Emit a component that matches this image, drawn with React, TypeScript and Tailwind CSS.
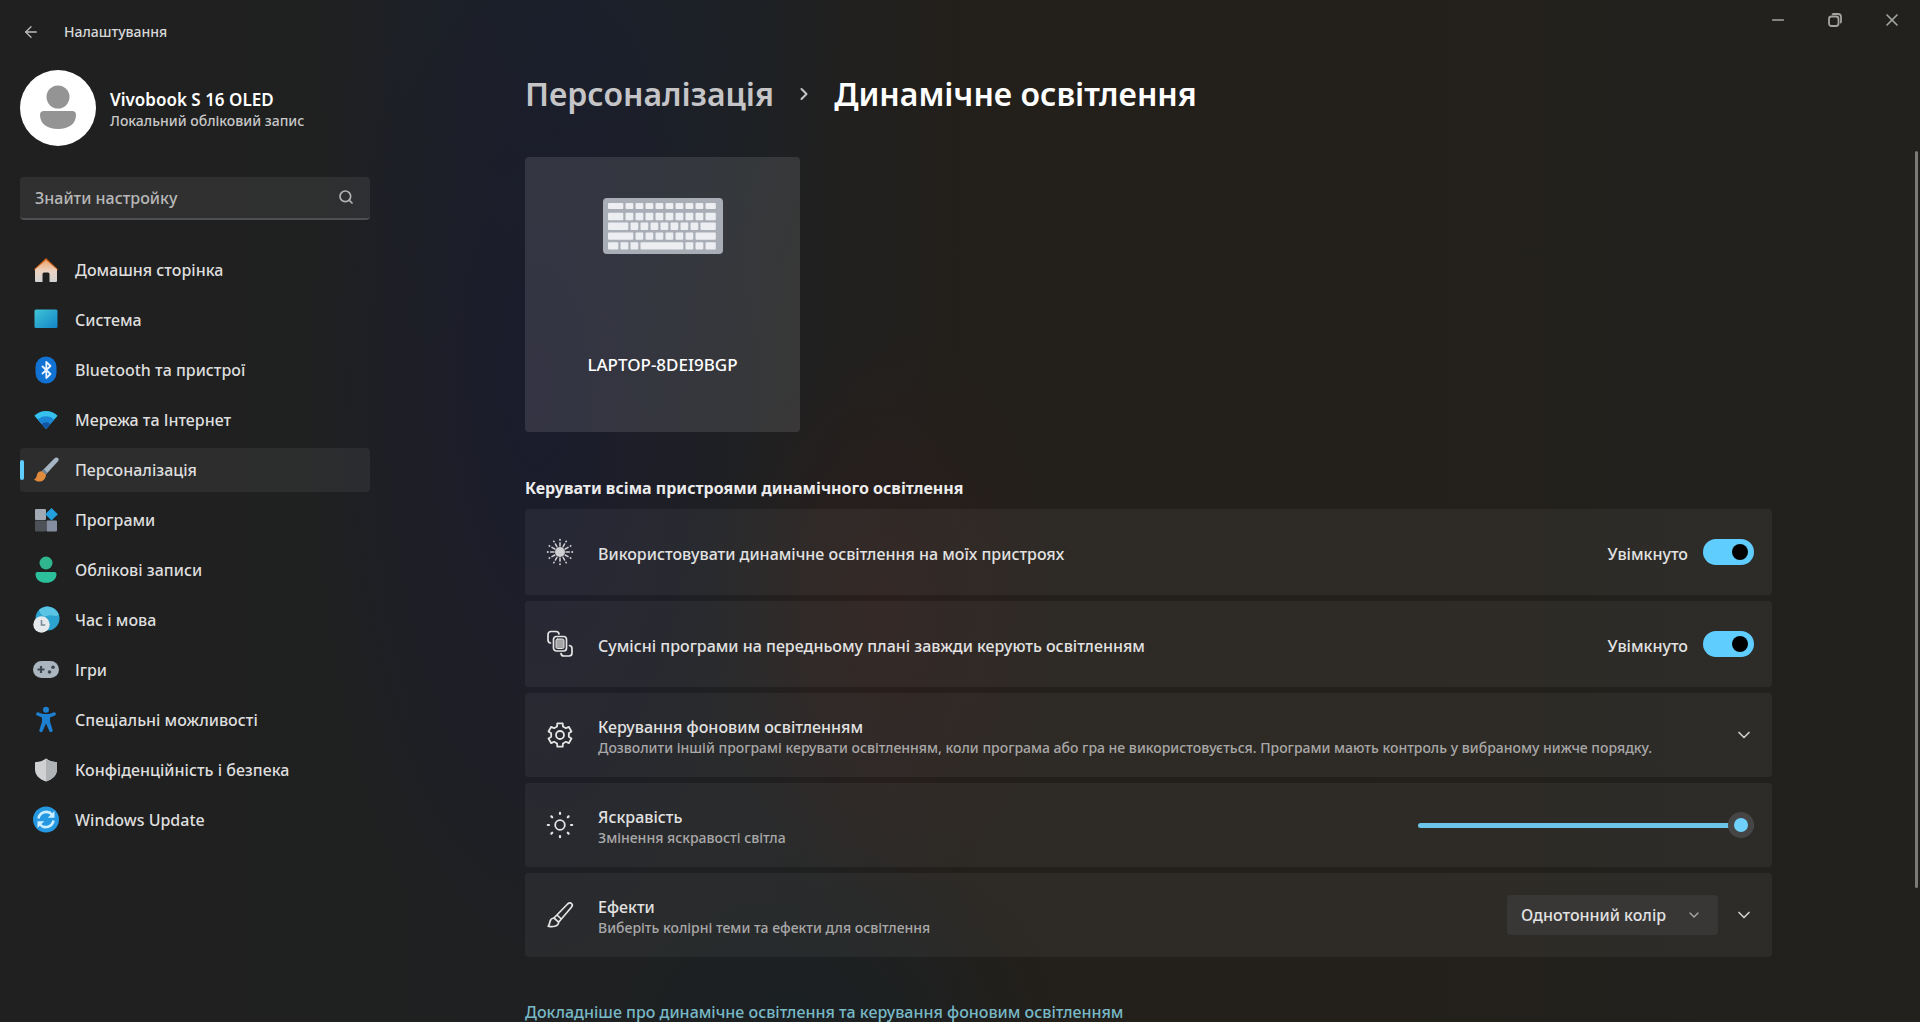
import React, { useState } from "react";
import { ArrowLeft, ChevronDown, ChevronRight, Minus, Search, X } from "lucide-react";

const HomeIcon = () => (
  <svg viewBox="0 0 24 24" className="size-6">
    <defs>
      <linearGradient id="home-wall" x1="0" y1="0" x2="0" y2="1">
        <stop offset="0" stopColor="#f0a56c" />
        <stop offset="0.5" stopColor="#ecd3c2" />
        <stop offset="1" stopColor="#d2d2d2" />
      </linearGradient>
    </defs>
    <path d="M12 0 .6 10.800a1.200 1.200 0 0 0 1.600 1.700L12 4l9.800 8.500a1.200 1.200 0 0 0 1.600-1.700Z" fill="#c8601c" />
    <path d="M12 2 1 11.500V23a1 1 0 0 0 1 1h6.500v-8a1.500 1.500 0 0 1 1.500-1.500h4a1.500 1.500 0 0 1 1.500 1.500v8H22a1 1 0 0 0 1-1V11.500Z" fill="url(#home-wall)" />
  </svg>
);

const SystemIcon = () => (
  <svg viewBox="0 0 24 24" className="size-6">
    <defs>
      <linearGradient id="system" x1="0" y1="0" x2="1" y2="1">
        <stop offset="0" stopColor="#40c6d6" />
        <stop offset="1" stopColor="#1383c6" />
      </linearGradient>
    </defs>
    <rect x="0.500" y="1.500" width="23" height="18.500" rx="1.500" fill="url(#system)" />
  </svg>
);

const BluetoothIcon = () => (
  <svg viewBox="0 0 24 24" className="size-6 overflow-visible">
    <rect x="1.500" y="-1.500" width="21" height="27" rx="10.500" fill="#1172d3" />
    <path d="m8 8 8.500 8-4.200 4V4l4.200 4L8 16" fill="none" stroke="#e9f4ff" strokeWidth="1.800" strokeLinejoin="round" />
  </svg>
);

const NetworkIcon = () => (
  <svg viewBox="0 0 24 24" className="size-6">
    <path d="M12 3C7.400 3 3.300 4.700.4 7.800L12 21 23.600 7.800C20.700 4.700 16.600 3 12 3Z" fill="#35c0ee" />
    <path d="M3.900 11.700a11.500 11.500 0 0 1 16.200 0L12 21Z" fill="#1c86d6" />
    <path d="M7.600 16a6.200 6.200 0 0 1 8.800 0L12 21Z" fill="#1256a3" />
  </svg>
);

const BrushIcon = () => (
  <svg viewBox="0 0 24 24" className="size-6 overflow-visible">
    <path d="M24 0c-1-1-2.600-.6-3.700.4L7.500 13.500l3.700 3.700L23.800 3.600C24.800 2.500 25 1 24 0Z" fill="#a5b5c4" />
    <path d="m7.500 13.500 2.300-2.400 3.700 3.700-2.300 2.400Z" fill="#6f7f8e" />
    <path d="M7.800 13.300c-2.800-.2-4.400 1.300-4.900 3.700-.4 2-1 3.600-2.900 4.600 3.500 3.600 11.600 2.600 12-4.800Z" fill="#e08a3c" />
  </svg>
);

const AppsIcon = () => (
  <svg viewBox="0 0 24 24" className="size-6">
    <rect x="1" y="1" width="11" height="11" rx="1" fill="#a3a9b3" />
    <rect x="1" y="12.500" width="11" height="11" rx="1" fill="#4c5258" />
    <rect x="12.500" y="12.500" width="10.500" height="11" rx="1" fill="#858da0" />
    <path d="m17.500 0 6.300 6.200-6.300 6.200-6.300-6.200Z" fill="#22a0dd" />
  </svg>
);

const AccountsIcon = () => (
  <svg viewBox="0 0 24 24" className="size-6 overflow-visible">
    <circle cx="12" cy="5" r="6.500" fill="#2fb68f" />
    <path d="M3.500 14h17a2 2 0 0 1 2 2c0 5.500-4.500 8.800-10.500 8.800S1.500 21.500 1.500 16a2 2 0 0 1 2-2Z" fill="#2bbf9b" />
  </svg>
);

const TimeIcon = () => (
  <svg viewBox="0 0 24 24" className="size-6 overflow-visible">
    <circle cx="13.500" cy="10.500" r="12" fill="#2ba2cf" />
    <path d="M13.500-1.500a12 12 0 0 1 11.300 8.500c-4 2.500-8-1-12 1S6 5 5 2a12 12 0 0 1 8.500-3.500Z" fill="#59c4e4" />
    <circle cx="7.500" cy="16.500" r="8.200" fill="#e6e9ec" />
    <path d="M7.500 12v5h3.800" fill="none" stroke="#7b8a94" strokeWidth="1.600" />
  </svg>
);

const GamesIcon = () => (
  <svg viewBox="0 0 24 24" className="size-6 overflow-visible">
    <rect x="-1" y="3" width="26" height="17" rx="8.500" fill="#aab5c0" />
    <path d="M7 8v7M3.500 11.500h7" stroke="#3d474f" strokeWidth="2.200" />
    <circle cx="15.500" cy="14" r="1.800" fill="#3d474f" />
    <circle cx="19" cy="9.300" r="1.800" fill="#3d474f" />
  </svg>
);

const AccessibilityIcon = () => (
  <svg viewBox="0 0 24 24" className="size-6 overflow-visible">
    <circle cx="12" cy="1.800" r="3" fill="#1d7fd0" />
    <path
      d="M2.300 5.200c.5-1 1.500-1.300 2.500-.8 4.500 2.100 9.900 2.100 14.400 0 1-.5 2-.2 2.500.8s0 2-.9 2.400L16 9.500v4.200l2.600 8.200c.3 1-.1 1.900-1.100 2.200s-1.900-.2-2.200-1.100L12 15.500 8.700 23c-.3.900-1.200 1.400-2.200 1.100s-1.400-1.200-1.100-2.200L8 13.700V9.500L3.200 7.600c-.9-.4-1.400-1.400-.9-2.400Z"
      fill="#1d7fd0"
    />
  </svg>
);

const PrivacyIcon = () => (
  <svg viewBox="0 0 24 24" className="size-6">
    <path d="M12 .5c3 2.400 6.500 3.500 11 3.700v7C23 17 19 21 12 23.500 5 21 1 17 1 11.200v-7C5.500 4 9 2.900 12 .5Z" fill="#cfd1d3" />
    <path d="M12 .5c3 2.400 6.500 3.500 11 3.700v7C23 17 19 21 12 23.500Z" fill="#b0b3b6" />
  </svg>
);

const UpdateIcon = () => (
  <svg viewBox="0 0 24 24" className="size-6 overflow-visible">
    <circle cx="12" cy="11.500" r="13" fill="#2498e0" />
    <path d="M4.500 10.500A7.800 7.800 0 0 1 18 6.500M19.500 12.500A7.800 7.800 0 0 1 6 16.500" fill="none" stroke="#cdeeff" strokeWidth="2.600" />
    <path d="M20.500 3v6.800h-6.800ZM3.500 20v-6.800h6.800Z" fill="#cdeeff" />
  </svg>
);

const navItems = [
  { id: "home", label: "Домашня сторінка", icon: HomeIcon },
  { id: "system", label: "Система", icon: SystemIcon },
  { id: "bluetooth", label: "Bluetooth та пристрої", icon: BluetoothIcon },
  { id: "network", label: "Мережа та Інтернет", icon: NetworkIcon },
  { id: "personalization", label: "Персоналізація", icon: BrushIcon },
  { id: "apps", label: "Програми", icon: AppsIcon },
  { id: "accounts", label: "Облікові записи", icon: AccountsIcon },
  { id: "time", label: "Час і мова", icon: TimeIcon },
  { id: "games", label: "Ігри", icon: GamesIcon },
  { id: "accessibility", label: "Спеціальні можливості", icon: AccessibilityIcon },
  { id: "privacy", label: "Конфіденційність і безпека", icon: PrivacyIcon },
  { id: "update", label: "Windows Update", icon: UpdateIcon },
];

// Key widths per row, in key units
const keyRows = [
  [1.75, 1, 1, 1, 1, 1, 1, 1, 1, 1.25],
  [1.75, 1, 1, 1, 1, 1, 1, 1, 1, 1.25],
  [2.25, 1, 1, 1, 1, 1, 1, 1, 1.75],
  [2.75, 1, 1, 1, 1, 1, 1, 2.25],
  [1.25, 1, 1, 4.5, 1, 1, 1.25],
];

const KeyboardArt = () => (
  <svg viewBox="0 0 120 56" className="h-14 w-[120px]">
    <rect width="120" height="56" rx="4" fill="#a9adb6" />
    {keyRows.map((row, r) => {
      let x = 5;
      return row.map((units, k) => {
        const width = units * 10;
        const key = <rect key={`${r}-${k}`} x={x} y={5 + r * 9.8} width={width - 2.2} height={r ? 7.4 : 6} rx="1" fill="#eceef2" />;
        x += width;
        return key;
      });
    })}
  </svg>
);

const rayAngles = [0, 30, 60, 90, 120, 150, 180, 210, 240, 270, 300, 330];

const LightingIcon = () => (
  <svg viewBox="0 0 28 28" className="size-7 text-[#cfcfd3]" stroke="currentColor" strokeLinecap="round">
    <circle cx="14" cy="14" r="5" fill="currentColor" stroke="none" />
    {rayAngles.map((a) => (
      <g key={a} transform={`rotate(${a} 14 14)`}>
        <path d="M14 8V4.700" strokeWidth="1.500" />
        <path d="M14 1.700v.2" strokeWidth="1.800" />
      </g>
    ))}
  </svg>
);

const LayersIcon = () => (
  <svg viewBox="0 0 28 28" className="size-7 text-[#e4e4e4]" fill="none" stroke="currentColor" strokeWidth="1.700" strokeLinecap="round">
    <rect x="7.500" y="6.500" width="13" height="14.500" rx="3" />
    <rect x="10" y="9" width="8" height="9.500" rx="1.500" fill="#a5a5a8" strokeWidth="1" />
    <path d="M4.500 13A3 3 0 0 1 2 10V4.500a3 3 0 0 1 3-3h5A3 3 0 0 1 13 4" />
    <path d="M23.500 15.500A3 3 0 0 1 26 18.500V23a3 3 0 0 1-3 3h-5a3 3 0 0 1-3-2.500" />
  </svg>
);

// Six flat teeth around the hub, starting at the top
const gearPoints = [0, 60, 120, 180, 240, 300]
  .flatMap((a) => [
    [12, a - 13],
    [12, a + 13],
    [9, a + 19],
    [9, a + 41],
  ])
  .map(([r, deg]) => {
    const t = ((deg - 90) * Math.PI) / 180;
    return `${(14 + r * Math.cos(t)).toFixed(2)},${(14 + r * Math.sin(t)).toFixed(2)}`;
  })
  .join(" ");

const GearIcon = () => (
  <svg viewBox="0 0 28 28" className="size-7 text-[#e4e4e4]" fill="none" stroke="currentColor" strokeWidth="1.800" strokeLinejoin="round">
    <polygon points={gearPoints} />
    <circle cx="14" cy="14" r="4" />
  </svg>
);

const BrightnessIcon = () => (
  <svg viewBox="0 0 28 28" className="size-7 text-[#e4e4e4]" fill="none" stroke="currentColor" strokeWidth="1.800" strokeLinecap="round">
    <circle cx="14" cy="14" r="4.800" />
    {[0, 45, 90, 135, 180, 225, 270, 315].map((a) => (
      <path key={a} d="M14 3V1.800" strokeWidth="2.200" transform={`rotate(${a} 14 14)`} />
    ))}
  </svg>
);

// Slim brush: long handle, ferrule line, small tip at the bottom left
const PaintIcon = () => (
  <svg viewBox="0 0 28 28" className="size-7 text-[#e4e4e4]" fill="none" stroke="currentColor" strokeWidth="1.700" strokeLinejoin="round">
    <path d="M25.600 2.600c-1.200-1.200-2.800-.7-4 .4L8 17l4.600 4.200L25.200 6.500c1-1.200 1.500-2.900.4-3.900Z" />
    <path d="M8 17c-2.500.2-3.600 1.500-4 3.500-.3 1.900-.7 3.200-1.800 4.700 3.800 1 10.200.6 10.400-4" />
    <path d="m11 14 4.300 4" />
  </svg>
);

const RestoreIcon = () => (
  <svg viewBox="0 0 14 14" className="size-3.5" fill="none" stroke="currentColor" strokeWidth="1.800">
    <rect x="1" y="3.500" width="9.500" height="9.500" rx="2.500" />
    <path d="M4 1.500A3 3 0 0 1 5.500 1H10a3 3 0 0 1 3 3v4.500a3 3 0 0 1-.7 1.700" />
  </svg>
);

type RowProps = {
  icon: React.ReactNode;
  title: string;
  text?: string;
  htmlFor?: string;
  children?: React.ReactNode;
};

function SettingRow({ icon, title, text, htmlFor, children }: RowProps) {
  return (
    <div className={`flex items-center gap-6 rounded-sm bg-white/5 pl-[21px] pr-[18px] ${text ? "h-[84px]" : "h-[86px]"}`}>
      <div className="flex size-7 shrink-0 items-center justify-center">{icon}</div>
      <div className="min-w-0 flex-1 pt-1">
        <label htmlFor={htmlFor} className="block text-[16px] font-medium leading-[22px] text-[#e2e2e2]">
          {title}
        </label>
        {text && <p className="text-[14px] font-medium leading-[20px] text-[#a9a8a8]">{text}</p>}
      </div>
      {children}
    </div>
  );
}

function Toggle({ id, checked, onChange }: { id: string; checked: boolean; onChange: (v: boolean) => void }) {
  return (
    <div className="flex items-center gap-[15px]">
      <span className="pt-1 text-[16px] font-medium leading-[22px] text-[#e2e2e2]">{checked ? "Увімкнуто" : "Вимкнуто"}</span>
      <input
        id={id}
        type="checkbox"
        role="switch"
        checked={checked}
        onChange={(e) => onChange(e.target.checked)}
        className="flex h-[26px] w-[51px] appearance-none items-center justify-start rounded-full bg-[#777] px-1.5 before:size-4 before:rounded-full before:bg-black checked:justify-end checked:bg-[#60cdff]"
      />
    </div>
  );
}

export default function App() {
  const [active, setActive] = useState("personalization");
  const [lighting, setLighting] = useState(true);
  const [foreground, setForeground] = useState(true);
  const [brightness, setBrightness] = useState(100);

  return (
    <div className="relative flex h-screen flex-col overflow-hidden bg-[#21201e] bg-[radial-gradient(ellipse_9%_28%_at_46%_60%,#2a1e1c_0%,transparent_100%),radial-gradient(ellipse_12%_60%_at_28%_38%,#1b1c2d_0%,transparent_100%),radial-gradient(ellipse_14%_45%_at_30%_0%,#1a212a_0%,transparent_100%),radial-gradient(ellipse_14%_18%_at_42%_100%,#1b2022_0%,transparent_100%),linear-gradient(90deg,#202020_0%,#1f2021_30%,#1f2021_40%,#231f1a_52%,#23201b_70%,#22211e_100%)] font-['Noto_Sans',sans-serif] text-white">
      {/* Title bar */}
      <header className="flex items-start justify-between">
        <div className="flex h-16 items-center pl-5">
          <button aria-label="Назад" className="flex w-[44px] pl-0.5 text-[#bdbdbd]">
            <ArrowLeft className="size-[18px]" strokeWidth={1.75} />
          </button>
          <span className="text-[14px] font-medium leading-[20px] text-[#d8d8d8]">Налаштування</span>
        </div>
        <div className="flex h-10 text-[#a4a4a2]">
          <button aria-label="Згорнути" className="flex w-[57px] items-center justify-center">
            <Minus className="size-[18px]" strokeWidth={2.25} />
          </button>
          <button aria-label="Відновити" className="flex w-[57px] items-center justify-center">
            <RestoreIcon />
          </button>
          <button aria-label="Закрити" className="flex w-[57px] items-center justify-center">
            <X className="size-5" strokeWidth={2} />
          </button>
        </div>
      </header>

      <div className="flex min-h-0 flex-1">
        {/* Sidebar */}
        <aside className="ml-5 w-[350px] shrink-0 pt-1.5">
          <div className="flex items-center gap-3.5">
            <svg viewBox="0 0 76 76" className="size-[76px]">
              <circle cx="38" cy="38" r="38" fill="#fff" />
              <circle cx="38" cy="27" r="11.500" fill="#949494" />
              <path d="M24 41h28a4 4 0 0 1 4 4c0 8.500-7 14-18 14s-18-5.500-18-14a4 4 0 0 1 4-4Z" fill="#949494" />
            </svg>
            <div className="pt-1">
              <p className="text-[17px] font-semibold leading-[22px]">Vivobook S 16 OLED</p>
              <p className="text-[14px] font-medium leading-[20px] text-[#c8c8c8]">Локальний обліковий запис</p>
            </div>
          </div>

          <div className="relative mt-[31px]">
            <input
              type="text"
              aria-label="Знайти настройку"
              placeholder="Знайти настройку"
              className="h-[43px] w-full rounded-sm border-b-2 border-[#4e4f53] bg-white/7 pl-[15px] pr-12 text-[16px] font-medium outline-none placeholder:text-[#b8b8b8]"
            />
            <Search className="absolute right-4 top-3 size-4 text-[#b4b4b4]" strokeWidth={2.5} />
          </div>

          <nav className="mt-7 flex flex-col gap-1.5">
            {navItems.map((item) => (
              <button
                key={item.id}
                onClick={() => setActive(item.id)}
                className={`relative flex h-11 items-center gap-[17px] rounded-sm pl-3.5 text-left text-[16px] font-medium text-[#dedede] ${
                  active === item.id ? "bg-white/6" : ""
                }`}
              >
                {active === item.id && <span className="absolute left-0 h-5 w-1 rounded-full bg-[#60cdff]" />}
                <item.icon />
                {item.label}
              </button>
            ))}
          </nav>
        </aside>

        {/* Page content */}
        <main className="min-w-0 flex-1 pl-[155px] pr-[148px] pt-2">
          <h1 className="flex items-center text-[32px] font-semibold leading-[44px]">
            <a href="#personalization" className="text-[#c5c5c8]">
              Персоналізація
            </a>
            <ChevronRight className="mx-5 size-5 text-[#c5c5c8]" strokeWidth={2.5} />
            <span>Динамічне освітлення</span>
          </h1>

          <div className="mt-[41px] flex h-[275px] w-[275px] flex-col items-center rounded-sm bg-white/11 pt-[41px]">
            <KeyboardArt />
            <p className="mt-[100px] text-[17px] font-medium leading-[22px]">LAPTOP-8DEI9BGP</p>
          </div>

          <h2 className="mt-11 text-[16px] font-bold leading-[24px] text-[#ececec]">Керувати всіма пристроями динамічного освітлення</h2>

          <div className="mt-[9px] flex flex-col gap-1.5">
            <SettingRow icon={<LightingIcon />} title="Використовувати динамічне освітлення на моїх пристроях" htmlFor="lighting">
              <Toggle id="lighting" checked={lighting} onChange={setLighting} />
            </SettingRow>
            <SettingRow icon={<LayersIcon />} title="Сумісні програми на передньому плані завжди керують освітленням" htmlFor="foreground">
              <Toggle id="foreground" checked={foreground} onChange={setForeground} />
            </SettingRow>
            <SettingRow
              icon={<GearIcon />}
              title="Керування фоновим освітленням"
              text="Дозволити іншій програмі керувати освітленням, коли програма або гра не використовується. Програми мають контроль у вибраному нижче порядку."
              htmlFor="background"
            >
              <button id="background" className="text-[#d0d0d0]">
                <ChevronDown className="size-5" strokeWidth={2} />
              </button>
            </SettingRow>
            <SettingRow icon={<BrightnessIcon />} title="Яскравість" text="Змінення яскравості світла" htmlFor="brightness">
              <input
                id="brightness"
                type="range"
                min={0}
                max={100}
                value={brightness}
                onChange={(e) => setBrightness(Number(e.target.value))}
                style={{ "--fill": `${brightness}%` } as React.CSSProperties}
                className="h-[26px] w-[336px] appearance-none bg-transparent [&::-webkit-slider-runnable-track]:h-[5px] [&::-webkit-slider-runnable-track]:rounded-full [&::-webkit-slider-runnable-track]:bg-[linear-gradient(90deg,#6cc4ea_var(--fill),#8a8a8a_var(--fill))] [&::-webkit-slider-thumb]:-mt-[11px] [&::-webkit-slider-thumb]:size-[26px] [&::-webkit-slider-thumb]:appearance-none [&::-webkit-slider-thumb]:rounded-full [&::-webkit-slider-thumb]:border-[6px] [&::-webkit-slider-thumb]:border-[#454545] [&::-webkit-slider-thumb]:bg-[#6fd0fb]"
              />
            </SettingRow>
            <SettingRow icon={<PaintIcon />} title="Ефекти" text="Виберіть колірні теми та ефекти для освітлення" htmlFor="effects">
              <div className="flex items-center gap-4">
                <div className="relative">
                  <select
                    id="effects"
                    className="h-10 w-[211px] appearance-none rounded-sm bg-[#383736] pl-3.5 text-[16px] font-medium text-[#e2e2e2] outline-none"
                  >
                    <option>Однотонний колір</option>
                    <option>Веселка</option>
                  </select>
                  <ChevronDown className="pointer-events-none absolute right-4 top-3 size-4 text-[#a8a8a8]" strokeWidth={2} />
                </div>
                <button aria-label="Розгорнути" className="text-[#d0d0d0]">
                  <ChevronDown className="size-5" strokeWidth={2} />
                </button>
              </div>
            </SettingRow>
          </div>

          <a href="#more" className="mt-[43px] block text-[16px] font-medium leading-[24px] text-[#78b8c6]">
            Докладніше про динамічне освітлення та керування фоновим освітленням
          </a>
        </main>
      </div>

      {/* Scroll thumb */}
      <div className="absolute right-0.5 top-[151px] bottom-[134px] w-[3px] rounded-full bg-[#7b7a78]" />
    </div>
  );
}
